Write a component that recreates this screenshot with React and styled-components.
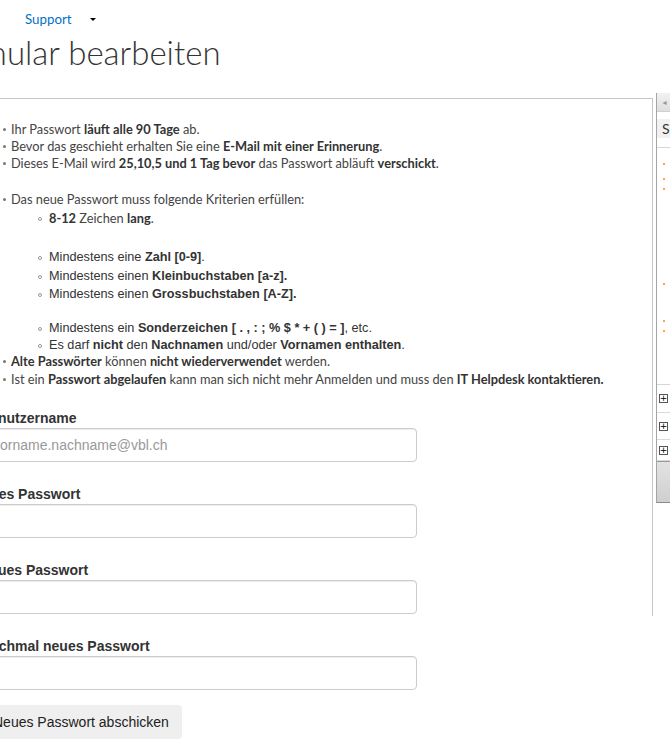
import React from 'react';
import styled, { createGlobalStyle } from 'styled-components';

const GlobalStyle = createGlobalStyle`
  html, body {
    margin: 0;
    padding: 0;
    background: #fff;
    overflow: hidden;
  }
  body {
    font-family: Lato, "Open Sans", sans-serif;
    color: #444;
  }
`;

// the page is scrolled sideways, so everything is shifted left
const Viewport = styled.div`
  width: 670px;
  height: 748px;
  overflow: hidden;
`;

const Page = styled.div`
  margin-left: -80px;
  width: 900px;
`;

const TopNav = styled.div`
  display: flex;
  align-items: center;
  gap: 18px;
  height: 30px;
  padding: 8px 0 0 105px;
  box-sizing: border-box;
`;

const NavLink = styled.a`
  font-size: 13.3px;
  line-height: 20px;
  color: #0072c6;
  text-decoration: none;
`;

const Caret = styled.span`
  width: 0;
  height: 0;
  border-left: 3px solid transparent;
  border-right: 3px solid transparent;
  border-top: 3px solid #000;
`;

const Title = styled.h1`
  margin: 0;
  padding-left: 13px;
  font-family: Lato, sans-serif;
  font-weight: 300;
  font-size: 33px;
  line-height: 44px;
  color: #333;
`;

const Body = styled.div`
  display: flex;
  align-items: flex-start;
  margin-top: 19px;
`;

const Panel = styled.div`
  margin: 5px 0 0 40px;
  width: 693px;
  height: 518px;
  box-sizing: border-box;
  border: 1px solid #c6c6c6;
  border-bottom: none;
  padding: 22px 0 0 19px;
`;

const List = styled.ul`
  list-style: none;
  margin: 0;
  padding: 0;
`;

const Item = styled.li`
  display: flex;
  align-items: center;
  white-space: nowrap;
  margin-top: ${(p) => p.$mt || 0}px;
  padding-left: ${(p) => (p.$nested ? 58 : 23)}px;
  font-family: ${(p) => (p.$arial ? '"Liberation Sans", Arial, sans-serif' : 'Lato, sans-serif')};
  font-size: ${(p) => (p.$arial ? 12.7 : 12.8)}px;
  line-height: 17px;
  color: ${(p) => (p.$arial ? '#333' : '#444')};

  &::before {
    content: '';
    flex: none;
    box-sizing: border-box;
    width: ${(p) => (p.$nested ? 4 : 3)}px;
    height: ${(p) => (p.$nested ? 4 : 3)}px;
    margin-right: ${(p) => (p.$nested ? 7 : 5)}px;
    border-radius: 50%;
    background: ${(p) => (p.$nested ? '#fff' : '#777')};
    border: ${(p) => (p.$nested ? '1px solid #999' : 'none')};
  }

  b {
    font-weight: 700;
    color: #333;
  }
`;

const Form = styled.form`
  display: flex;
  flex-direction: column;
  align-items: flex-start;
  margin-top: 20px;
  font-family: "Liberation Sans", Arial, sans-serif;
`;

const Group = styled.div`
  display: flex;
  flex-direction: column;
  & + & {
    margin-top: 22px;
  }
`;

const Label = styled.label`
  display: block;
  font-size: 14px;
  font-weight: 700;
  line-height: 20px;
  color: #333;
`;

const Input = styled.input`
  width: 437px;
  height: 34px;
  box-sizing: border-box;
  padding: 6px 12px;
  border: 1px solid #ccc;
  border-radius: 4px;
  box-shadow: inset 0 1px 1px rgba(0, 0, 0, 0.075);
  font-family: "Liberation Sans", Arial, sans-serif;
  font-size: 14px;
  color: #555;
  outline: none;

  &::placeholder {
    color: #999;
  }
`;

const SubmitButton = styled.button`
  margin-top: 15px;
  height: 34px;
  padding: 0 13px;
  border: none;
  border-radius: 4px;
  background: #efefef;
  font-family: "Liberation Sans", Arial, sans-serif;
  font-size: 14px;
  color: #222;
`;

/* the web part sitting on the right edge */
const Widget = styled.div`
  margin-left: 3px;
  width: 40px;
  height: 410px;
  box-sizing: border-box;
  border-left: 1px solid #a5a5a5;
  border-bottom: 1px solid #8a8a8a;
  display: flex;
  flex-direction: column;
`;

const WidgetHead = styled.div`
  height: 18px;
  display: flex;
  align-items: center;
  padding-left: 4px;
  background: linear-gradient(#f2f2f2, #dedede);
  border-bottom: 1px solid #d0d0d0;
  font-size: 7px;
  color: #9a9a9a;
`;

const WidgetTitle = styled.div`
  margin-top: 7px;
  height: 19px;
  display: flex;
  align-items: center;
  padding-left: 5px;
  background: #f1f1f1;
  font-size: 14px;
  color: #333;
`;

const WidgetList = styled.div`
  height: 236px;
  margin-top: 9px;
  border-top: 1px solid #d6d6d6;
  border-bottom: 1px solid #d6d6d6;
  display: flex;
  flex-direction: column;
  padding-left: 6px;
`;

const Dot = styled.span`
  width: 2px;
  height: 2px;
  margin-top: ${(p) => p.$mt}px;
  background: #f3a35a;
`;

const TrackHint = styled.span`
  align-self: flex-end;
  margin-top: 14px;
  width: 1px;
  height: 32px;
  background: #bbb;
`;

const ExpandRow = styled.div`
  height: ${(p) => p.$h}px;
  display: flex;
  align-items: center;
  padding-left: 2px;
  border-bottom: 1px solid #dadada;
`;

const PlusBox = styled.span`
  width: 9px;
  height: 9px;
  box-sizing: border-box;
  border: 1px solid #555;
  background: #fff;
  display: flex;
  align-items: center;
  justify-content: center;
  font-family: "DejaVu Sans", sans-serif;
  font-size: 9px;
  line-height: 1;
  color: #000;
`;

const WidgetFoot = styled.div`
  flex: 1;
  background: linear-gradient(#e2e2e2, #cfcfcf);
  border-top: 1px solid #9a9a9a;
`;

export default function App() {
  return (
    <Viewport>
      <GlobalStyle />
      <Page>
        <TopNav>
          <NavLink href="#">Support</NavLink>
          <Caret />
        </TopNav>
        <Title>Formular bearbeiten</Title>
        <Body>
          <Panel>
            <List>
              <Item>Ihr Passwort&nbsp;<b>läuft alle 90 Tage</b>&nbsp;ab.</Item>
              <Item>Bevor das geschieht erhalten Sie eine&nbsp;<b>E-Mail mit einer Erinnerung</b>.</Item>
              <Item>Dieses E-Mail wird&nbsp;<b>25,10,5 und 1 Tag bevor</b>&nbsp;das Passwort abläuft&nbsp;<b>verschickt</b>.</Item>
              <Item $mt={19}>Das neue Passwort muss folgende Kriterien erfüllen:</Item>
              <Item $nested $mt={2}><b>8-12</b>&nbsp;Zeichen&nbsp;<b>lang</b>.</Item>
              <Item $nested $arial $mt={22}>Mindestens eine&nbsp;<b>Zahl [0-9]</b>.</Item>
              <Item $nested $arial $mt={2}>Mindestens einen&nbsp;<b>Kleinbuchstaben [a-z].</b></Item>
              <Item $nested $arial $mt={1}>Mindestens einen&nbsp;<b>Grossbuchstaben [A-Z].</b></Item>
              <Item $nested $arial $mt={17}>Mindestens ein&nbsp;<b>Sonderzeichen [ . , : ; % $ * + ( ) = ]</b>, etc.</Item>
              <Item $nested $arial>Es darf&nbsp;<b>nicht</b>&nbsp;den&nbsp;<b>Nachnamen</b>&nbsp;und/oder&nbsp;<b>Vornamen enthalten</b>.</Item>
              <Item $mt={-1}><b>Alte Passwörter</b>&nbsp;können&nbsp;<b>nicht wiederverwendet</b>&nbsp;werden.</Item>
              <Item $mt={1}>Ist ein&nbsp;<b>Passwort abgelaufen</b>&nbsp;kann man sich nicht mehr Anmelden und muss den&nbsp;<b>IT Helpdesk kontaktieren.</b></Item>
            </List>
            <Form onSubmit={(e) => e.preventDefault()}>
              <Group>
                <Label>Benutzername</Label>
                <Input type="text" placeholder="vorname.nachname@vbl.ch" />
              </Group>
              <Group>
                <Label>Altes Passwort</Label>
                <Input type="password" />
              </Group>
              <Group>
                <Label>Neues Passwort</Label>
                <Input type="password" />
              </Group>
              <Group>
                <Label>Nochmal neues Passwort</Label>
                <Input type="password" />
              </Group>
              <SubmitButton type="submit">Neues Passwort abschicken</SubmitButton>
            </Form>
          </Panel>
          <Widget>
            <WidgetHead>◄</WidgetHead>
            <WidgetTitle>Suche</WidgetTitle>
            <WidgetList>
              <Dot $mt={15} />
              <Dot $mt={13} />
              <Dot $mt={8} />
              <Dot $mt={93} />
              <Dot $mt={35} />
              <Dot $mt={8} />
              <TrackHint />
            </WidgetList>
            <ExpandRow $h={27}><PlusBox>+</PlusBox></ExpandRow>
            <ExpandRow $h={26}><PlusBox>+</PlusBox></ExpandRow>
            <ExpandRow $h={20}><PlusBox>+</PlusBox></ExpandRow>
            <WidgetFoot />
          </Widget>
        </Body>
      </Page>
    </Viewport>
  );
}
